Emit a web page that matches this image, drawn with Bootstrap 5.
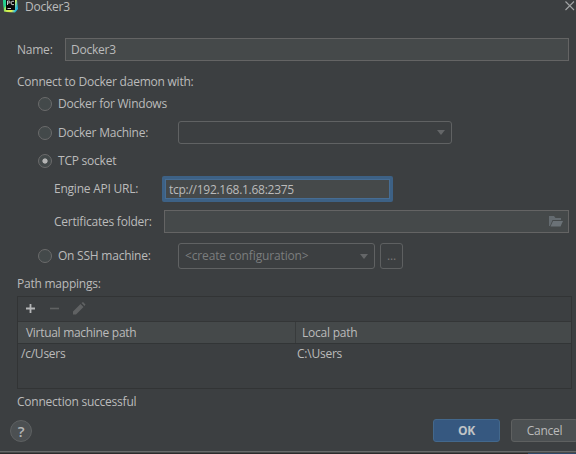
<!DOCTYPE html>
<html lang="en">
<head>
<meta charset="utf-8">
<title>Docker3</title>
<link href="https://cdn.jsdelivr.net/npm/bootstrap@5.3.0/dist/css/bootstrap.min.css" rel="stylesheet">
<style>
body{background:#3c3f41;color:#bbb;font:12px/18px "Open Sans","Noto Sans",sans-serif;letter-spacing:-.23px;width:576px;height:454px}
input,button{letter-spacing:inherit}
svg{display:block;flex:none}
.titlebar{height:13px;padding-left:3px;margin-bottom:25px}
.titlebar .caption{margin-left:7px;line-height:13px}
.line{height:23px;white-space:nowrap;padding-right:7px}
.field{background:#45494a;border:1px solid #646464;color:#bbb;height:23px;padding:0 5px;line-height:20px;border-radius:0;min-width:0;font-size:12px}
.field:focus{background:#45494a;color:#bbb}
.field-active,.field-active:focus{border:3px solid #3d6185;border-radius:2px;height:26px;width:231px;padding:0 4px;letter-spacing:-.27px;box-shadow:inset 0 0 0 1px #466d94}
.lbl{flex:none}
.radio-dot{appearance:none;flex:none;width:14px;height:14px;border-radius:50%;border:1px solid #6b6b6b;background:#43494a;margin:0 6px 0 0}
.radio-dot:checked{background:radial-gradient(circle,#b4b4b4 0 2.2px,#43494a 3px)}
.opt{padding-left:38px}
.sub{padding-left:54px}
.combo{border:1px solid #606263;border-radius:3px;height:23px;padding:0 6px;color:#7b7d7e;line-height:20px;letter-spacing:-.14px}
.dots{border:1px solid #5e6061;border-radius:3px;width:23px;height:26px;margin-left:5px;color:#777;background:none;padding:0;line-height:24px;font-size:12px}
.mappings{border:1px solid #323435;margin:3px 4px 0 17px;height:93px}
.tools{height:24px;padding-left:7px}
.maphead{background:#45494a;border-top:1px solid #343637;border-bottom:1px solid #323536;height:23px;line-height:21px}
.maphead>div,.maprow>div{flex:none}
.c1{width:278px}
.maphead .c1{padding-left:8px;border-right:1px solid #383b3c;letter-spacing:-.3px}
.maphead .c2{padding-left:6px}
.maprow{height:20px;line-height:20px}
.maprow .c1{padding-left:3px}
.maprow .c2{padding-left:1px}
.help{width:22px;height:22px;border-radius:50%;border:1px solid #5e6162;background:#4c5052;color:#b4b6b7;font-weight:600;font-size:15px;line-height:20px;text-align:center;padding:0;flex:none}
.foot{height:23px;margin-top:8px;padding-left:10px}
.dlg{height:23px;border-radius:3px;font-size:12px;line-height:20px;padding:0;flex:none}
.ok{width:67px;background:#365880;border:1px solid #43688c;color:#c0c3c6;font-weight:700}
.cancel{width:67px;background:#4c5052;border:1px solid #5e6060;color:#bbb}
.edge{margin-top:9px;height:2px;background:linear-gradient(#686a6a 50%,#484a4a 50%)}
.under{height:1px;background:#2b2b2b}
.under div{width:48px;background:#2f4868}
</style>
</head>
<body class="overflow-hidden">
<main class="d-flex flex-column">
  <header class="titlebar d-flex align-items-center">
    <svg width="15" height="13" viewBox="0 0 15 13"><defs><linearGradient id="g" x1="0" y1="0" x2="1" y2=".3"><stop offset="0" stop-color="#20d789"/><stop offset=".45" stop-color="#c8ee50"/><stop offset=".75" stop-color="#e8f050"/><stop offset="1" stop-color="#25b9df"/></linearGradient></defs><path d="M0 0H14L15 9 12 12.500 4 12 1 11.500Z" fill="url(#g)"/><path d="M0 0H3V6L1 8Z" fill="#21cf91"/><path d="M3 0H12V10H3Z" fill="#080808"/><path d="M4.500 5V1H6.200Q7 1 7 2T6.200 3H4.500M11 1.300H9Q8.100 1.500 8.100 3T9 4.600H11M4.500 8.500H8" fill="none" stroke="#ddd" stroke-width=".9"/></svg>
    <span class="caption">Docker3</span>
    <svg class="ms-auto" width="11" height="11" viewBox="0 0 11 11"><path d="M.5 .5 9 9M9 .5 .5 9" stroke="#a3a5a6" stroke-width="1.100"/></svg>
  </header>

  <div class="line d-flex align-items-center ps-3">
    <label class="lbl" for="name" style="width:49px;padding-left:1px">Name:</label>
    <input id="name" class="field form-control flex-fill" value="Docker3">
  </div>
  <div style="margin-top:12px;padding-left:17px">Connect to Docker daemon with:</div>

  <div class="line opt d-flex align-items-center" style="margin-top:2px;height:22px"><input type="radio" class="radio-dot" name="mode" id="m1"><label class="lbl" for="m1">Docker for Windows</label></div>
  <div class="line opt d-flex align-items-center" style="margin-top:6px"><input type="radio" class="radio-dot" name="mode" id="m2"><label class="lbl" for="m2" style="width:120px">Docker Machine:</label>
    <div class="combo d-flex align-items-center justify-content-end" style="width:274px"><svg width="8" height="5"><path d="M0 0H8L4 5Z" fill="#646668"/></svg></div></div>
  <div class="line opt d-flex align-items-center" style="margin-top:7px;height:20px"><input type="radio" class="radio-dot" name="mode" id="m3" checked><label class="lbl" for="m3">TCP socket</label></div>
  <div class="line sub d-flex align-items-center" style="margin-top:5px;height:26px"><label class="lbl" for="url" style="width:108px">Engine API URL:</label><input id="url" class="field field-active form-control" value="tcp://192.168.1.68:2375"></div>
  <div class="line sub d-flex align-items-center" style="margin-top:8px"><span class="lbl" style="width:110px">Certificates folder:</span>
    <div class="field flex-fill d-flex align-items-center justify-content-end"><svg width="14" height="11" viewBox="0 0 14 11"><path d="M0 10V0H5L6.500 2H12V4H3.500L1 10Z" fill="#646b70"/><path d="M4 5H14L11.500 10.500H1.500Z" fill="#6b7277"/></svg></div></div>
  <div class="line opt d-flex align-items-center" style="margin-top:10px;height:26px"><input type="radio" class="radio-dot" name="mode" id="m4"><label class="lbl" for="m4" style="width:120px">On SSH machine:</label>
    <div class="combo d-flex align-items-center justify-content-between" style="width:197px;height:26px"><span>&lt;create configuration&gt;</span><svg width="8" height="5"><path d="M0 0H8L4 5Z" fill="#646668"/></svg></div><button class="dots">...</button></div>

  <div style="margin-top:6px;padding-left:17px">Path mappings:</div>
  <section class="mappings">
    <div class="tools d-flex align-items-center">
      <svg width="62" height="14" viewBox="0 0 62 14"><path d="M1 6.500H10M5.500 2V11" stroke="#b4b6b7" stroke-width="1.800"/><path d="M25 6.500H34" stroke="#606263" stroke-width="1.600"/><path d="M48 12.500V9.500L55.500 2 58.500 5 51 12.500ZM56.500 1 58 0 60.500 2.500 59.500 4Z" fill="#606263"/></svg>
    </div>
    <div class="maphead d-flex"><div class="c1">Virtual machine path</div><div class="c2">Local path</div></div>
    <div class="maprow d-flex"><div class="c1">/c/Users</div><div class="c2">C:\Users</div></div>
  </section>
  <div style="margin-top:4px;padding-left:17px">Connection successful</div>

  <footer class="foot d-flex align-items-center overflow-hidden">
    <button class="help">?</button>
    <button class="dlg ok" style="margin-left:401px">OK</button>
    <button class="dlg cancel" style="margin-left:11px">Cancel</button>
  </footer>
  <div class="edge"></div>
  <div class="under d-flex justify-content-end"><div></div></div>
</main>
<script src="https://cdn.jsdelivr.net/npm/bootstrap@5.3.0/dist/js/bootstrap.bundle.min.js"></script>
</body>
</html>
